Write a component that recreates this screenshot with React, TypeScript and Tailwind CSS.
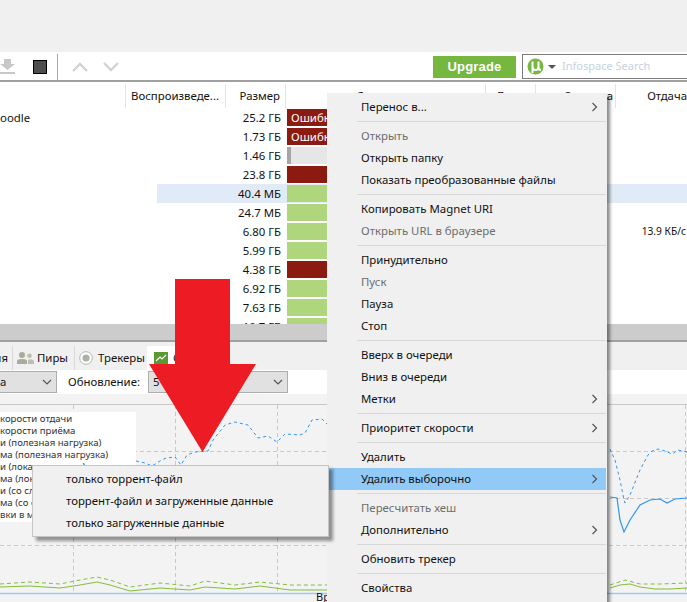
import React from "react";

const rows = [
  { name: "oodle", size: "25.2 ГБ", bar: "error", label: "Ошибка" },
  { name: "", size: "1.73 ГБ", bar: "error", label: "Ошибка" },
  { name: "", size: "1.46 ГБ", bar: "idle", label: "" },
  { name: "", size: "23.8 ГБ", bar: "error", label: "" },
  { name: "", size: "40.4 МБ", bar: "done", label: "", selected: true },
  { name: "", size: "24.7 МБ", bar: "done", label: "" },
  { name: "", size: "6.80 ГБ", bar: "done", label: "", upload: "13.9 КБ/с" },
  { name: "", size: "5.99 ГБ", bar: "done", label: "" },
  { name: "", size: "4.38 ГБ", bar: "error", label: "" },
  { name: "", size: "6.92 ГБ", bar: "done", label: "" },
  { name: "", size: "7.63 ГБ", bar: "done", label: "" },
  { name: "", size: "10.7 ГБ", bar: "done", label: "" },
];

type MenuItem = { text?: string; muted?: boolean; more?: boolean; active?: boolean };

const menu: MenuItem[] = [
  { text: "Перенос в...", more: true },
  {},
  { text: "Открыть", muted: true },
  { text: "Открыть папку" },
  { text: "Показать преобразованные файлы" },
  {},
  { text: "Копировать Magnet URI" },
  { text: "Открыть URL в браузере", muted: true },
  {},
  { text: "Принудительно" },
  { text: "Пуск", muted: true },
  { text: "Пауза" },
  { text: "Стоп" },
  {},
  { text: "Вверх в очереди" },
  { text: "Вниз в очереди" },
  { text: "Метки", more: true },
  {},
  { text: "Приоритет скорости", more: true },
  {},
  { text: "Удалить" },
  { text: "Удалить выборочно", more: true, active: true },
  {},
  { text: "Пересчитать хеш", muted: true },
  { text: "Дополнительно", more: true },
  {},
  { text: "Обновить трекер" },
  {},
  { text: "Свойства" },
];

const legend = [
  "корости отдачи",
  "корости приёма",
  "и (полезная нагрузка)",
  "ма (полезная нагрузка)",
  "и (локальная сеть)",
  "ма (локальная сеть)",
  "и (со служебными)",
  "ма (со служебными)",
  "вки в минуту",
];

function Chevron() {
  return (
    <svg width="7" height="10" viewBox="0 0 7 10" className="shrink-0">
      <path d="M1.5 1 L5.5 5 L1.5 9" fill="none" stroke="#555" strokeWidth="1.2" />
    </svg>
  );
}

function SelectArrow() {
  return (
    <svg width="10" height="6" viewBox="0 0 10 6" className="shrink-0">
      <path d="M1 1 L5 5 L9 1" fill="none" stroke="#555" strokeWidth="1.2" />
    </svg>
  );
}

function Chart() {
  // coordinates are relative to the graph panel, which starts at y=394
  const h = (y: number) => y - 394;
  const pts = (list: number[][]) => list.map(([x, y]) => `${x},${h(y)}`).join(" ");
  const vertical = [73, 175, 277, 379, 481, 583, 685];
  const horizontal = [451, 498, 545];
  return (
    <svg width="687" height="208" className="absolute left-0 top-0">
      <line x1="0" x2="687" y1={h(404.5)} y2={h(404.5)} stroke="#c8c8c8" />
      {vertical.map((x) => (
        <line key={x} x1={x + 0.5} x2={x + 0.5} y1={h(405)} y2={h(593)} stroke="#c8c8c8" strokeDasharray="4 3" />
      ))}
      {horizontal.map((y) => (
        <line key={y} x1="0" x2="687" y1={y - 393.5} y2={y - 393.5} stroke="#c8c8c8" strokeDasharray="4 3" />
      ))}
      <polyline
        fill="none"
        stroke="#2f96f3"
        strokeDasharray="3 3"
        points={pts([[136, 461], [145, 463], [152, 466], [160, 461], [166, 458], [175, 457], [181, 465], [187, 455], [195, 452], [208, 451], [213, 440], [225, 425], [235, 422], [248, 425], [258, 438], [268, 436], [277, 442], [285, 434], [300, 435], [305, 433], [312, 420], [322, 419], [327, 424]])}
      />
      <polyline
        fill="none"
        stroke="#2f96f3"
        strokeDasharray="3 3"
        points={pts([[610, 449], [615, 460], [620, 480], [624, 500], [625, 503], [630, 495], [640, 470], [648, 455], [652, 451], [658, 449], [665, 451], [672, 454], [678, 450], [687, 452]])}
      />
      <polyline
        fill="none"
        stroke="#2f96f3"
        strokeWidth="1.2"
        points={pts([[610, 497], [617, 498], [620, 520], [624, 532], [630, 520], [640, 505], [650, 500], [660, 499], [667, 503], [675, 499], [687, 498]])}
      />
      <polyline
        fill="none"
        stroke="#84bd3a"
        strokeDasharray="4 3"
        points={pts([[0, 584], [30, 582], [60, 584], [80, 580], [97, 577], [110, 580], [130, 587], [160, 583], [190, 586], [205, 581], [235, 585], [260, 582], [290, 585], [330, 585]])}
      />
      <polyline
        fill="none"
        stroke="#84bd3a"
        points={pts([[0, 587], [30, 586], [60, 588], [80, 585], [97, 582], [110, 585], [130, 591], [160, 588], [190, 590], [205, 587], [235, 589], [260, 586], [290, 590], [330, 590]])}
      />
      <polyline
        fill="none"
        stroke="#84bd3a"
        strokeDasharray="4 3"
        points={pts([[610, 585], [625, 580], [640, 584], [660, 584], [687, 583]])}
      />
      <polyline
        fill="none"
        stroke="#84bd3a"
        points={pts([[610, 588], [620, 585], [630, 584], [640, 587], [655, 589], [670, 589], [687, 588]])}
      />
      <line x1="0" x2="687" y1={h(593.5)} y2={h(593.5)} stroke="#9ccbee" strokeWidth="1.5" />
    </svg>
  );
}

export default function App() {
  return (
    <div className="relative flex h-[602px] w-[687px] flex-col overflow-hidden bg-white font-['Noto_Sans','Open_Sans',sans-serif] text-[11.4px] text-[#111]">
      {/* window top */}
      <div className="h-[52px] shrink-0 bg-[#f0f0f0]" />

      {/* toolbar */}
      <div className="flex h-[30px] shrink-0 items-center border-b-2 border-[#a0a0a0] bg-white pt-[2px]">
        <svg width="15" height="16" viewBox="0 0 15 16">
          <path d="M4 0 H11 V5 H15 L7.5 11 L0 5 H4 Z M0 13 H15 V15 H0 Z" fill="#c8c8c8" />
        </svg>
        <div className="ml-[18px] h-[14px] w-[14px] border border-black bg-[#4d4d4d]" />
        <div className="ml-[10px] h-[26px] w-px bg-[#a8a8a8]" />
        <svg width="16" height="10" viewBox="0 0 16 10" className="ml-[14px]">
          <path d="M1 9 L8 2 L15 9" fill="none" stroke="#d2d2d2" strokeWidth="2.4" />
        </svg>
        <svg width="16" height="10" viewBox="0 0 16 10" className="ml-[15px]">
          <path d="M1 1 L8 8 L15 1" fill="none" stroke="#d2d2d2" strokeWidth="2.4" />
        </svg>
        <div className="ml-[314px] flex h-[22px] w-[83px] items-center justify-center bg-[#76b73f] font-['Liberation_Sans',sans-serif] text-[13px] font-bold tracking-[0.2px] text-white">
          Upgrade
        </div>
        <div className="ml-[6px] mt-[-1px] flex h-[25px] flex-1 items-center border border-r-0 border-[#7c7c7c] pl-[4px]">
          <svg width="17" height="17" viewBox="0 0 17 17">
            <circle cx="8.5" cy="8.5" r="8" fill="#76b73f" />
            <path d="M5.5 3.5 V15 M5.5 8.5 Q5.5 12 8.5 12 Q11.5 12 11.5 8.5 V3.5 M11.5 8.5 Q11.5 12 14 12" fill="none" stroke="#fff" strokeWidth="2" />
          </svg>
          <div className="ml-[4px] h-0 w-0 border-x-[4px] border-t-[4px] border-x-transparent border-t-[#555]" />
          <span className="ml-[6px] text-[11px] text-[#c5d2e0]">Infospace Search</span>
        </div>
      </div>

      {/* list header */}
      <div className="flex h-[26px] shrink-0 items-center whitespace-nowrap bg-white pt-[2px]">
        <div className="h-[24px] w-[126px] border-r border-[#e5e5e5]" />
        <div className="flex h-[24px] w-[100px] items-center justify-end border-r border-[#e5e5e5] pr-[6px]">
          Воспроизведе...
        </div>
        <div className="flex h-[24px] w-[60px] items-center justify-end border-r border-[#e5e5e5] pr-[5px]">Размер</div>
        <div className="flex h-[24px] w-[200px] items-center justify-center border-r border-[#e5e5e5]">Состояние</div>
        <div className="flex h-[24px] w-[50px] items-center overflow-hidden border-r border-[#e5e5e5] pl-[10px]">Доступно</div>
        <div className="flex h-[24px] w-[80px] items-center overflow-hidden border-r border-[#e5e5e5] pl-[29px]">Загрузка</div>
        <div className="flex h-[24px] flex-1 items-center justify-end">Отдача</div>
      </div>

      {/* torrent rows */}
      <div className="h-[216px] shrink-0 overflow-hidden bg-white">
        {rows.map((r) => (
          <div key={r.size} className="flex h-[19px] items-center">
            <div className="w-[157px] shrink-0 truncate">{r.name}</div>
            <div className={`flex h-[19px] flex-1 items-center ${r.selected ? "bg-[#e1ebf7]" : ""}`}>
              <div className="flex w-[129px] shrink-0 items-center justify-end pr-[5px]">{r.size}</div>
              <div className="h-[17px] w-[200px] shrink-0 pl-px">
                {r.bar === "error" && (
                  <div className="flex h-[17px] items-center bg-[#8b1a10] pl-[4px] text-white">{r.label}</div>
                )}
                {r.bar === "done" && <div className="h-[17px] bg-[#afd67c]" />}
                {r.bar === "idle" && (
                  <div className="h-[17px] bg-[#e6e6e6]">
                    <div className="h-[17px] w-[4px] bg-[#a6a6a6]" />
                  </div>
                )}
              </div>
              <div className="flex-1 whitespace-nowrap pr-px text-right text-[10.2px]">{r.upload}</div>
            </div>
          </div>
        ))}
      </div>

      {/* splitter */}
      <div className="h-[18px] shrink-0 border-b-2 border-[#a0a0a0] bg-[#cccccc]" />

      {/* tabs */}
      <div className="flex h-[28px] shrink-0 items-end bg-[#f0f0f0]">
        <div className="flex h-[24px] w-[13px] items-center justify-end overflow-hidden border-r border-[#d9d9d9] pr-[4px]">ия</div>
        <div className="flex h-[24px] w-[62px] items-center border-r border-[#d9d9d9] pl-[4px]">
          <svg width="17" height="12" viewBox="0 0 17 12" className="shrink-0">
            <path d="M5 0 a2.8 2.8 0 0 1 0 6 a2.8 2.8 0 0 1 0 -6 Z M0 12 V9 Q0 7 5 7 Q10 7 10 9 V12 Z" fill="#a9ac9c" />
            <path d="M12.5 1.5 a2.3 2.3 0 0 1 0 4.6 a2.3 2.3 0 0 1 0 -4.6 Z M11 12 V8 Q13 6.8 15 7.4 Q17 8 17 9.5 V12 Z" fill="#bcbeb0" />
          </svg>
          <span className="ml-[3px]">Пиры</span>
        </div>
        <div className="flex h-[24px] w-[72px] items-center pl-[4px]">
          <svg width="14" height="14" viewBox="0 0 14 14" className="shrink-0">
            <circle cx="7" cy="7" r="6.3" fill="#fff" stroke="#b5b5b5" />
            <circle cx="7" cy="7" r="3.6" fill="#a9b3a0" />
          </svg>
          <span className="ml-[5px]">Трекеры</span>
        </div>
        <div className="flex h-[24px] w-[83px] items-center bg-white pl-[7px]">
          <svg width="14" height="12" viewBox="0 0 14 12" className="shrink-0">
            <rect width="14" height="12" fill="#5b9a32" />
            <path d="M2 9 L6 5 L8 7 L12 3" fill="none" stroke="#fff" strokeWidth="1.2" />
          </svg>
          <span className="ml-[5px]">Скорость</span>
        </div>
      </div>

      {/* graph options */}
      <div className="flex h-[24px] shrink-0 items-center bg-white">
        <div className="flex h-[22px] w-[57px] items-center justify-between border border-l-0 border-[#adadad] bg-[#e1e1e1] pr-[4px]">
          <span>а</span>
          <SelectArrow />
        </div>
        <span className="ml-[11px] w-[80px]">Обновление:</span>
        <div className="flex h-[22px] w-[140px] items-center justify-between border border-[#adadad] bg-[#e1e1e1] px-[4px]">
          <span>5</span>
          <SelectArrow />
        </div>
      </div>

      {/* graph */}
      <div className="relative flex-1 bg-[#f3f3f3]">
        <Chart />
        <div className="absolute left-0 top-[18px] h-[110px] w-[136px] overflow-hidden bg-white pt-px text-[9.6px] leading-[12px] text-[#333]">
          {legend.map((l) => (
            <div key={l} className="h-[12px] whitespace-nowrap">
              {l}
            </div>
          ))}
        </div>
        <span className="absolute left-[316px] top-[197px] text-[11px] leading-[12px]">Время</span>
      </div>

      {/* arrow pasted on top of the screenshot */}
      <svg width="108" height="174" viewBox="0 0 108 174" className="absolute left-[149px] top-[279px]">
        <path d="M26 0 H81 V85 H107 L53.5 173 L0 85 H26 Z" fill="#ed1c24" />
      </svg>

      {/* context menu */}
      <div className="absolute left-[327px] top-[93px] w-[280px] bg-[#f0f0f0] py-[3px] pl-[2px] pr-px shadow-[3px_3px_3px_rgba(0,0,0,0.45)]">
        {menu.map((m, i) =>
          m.text ? (
            <div
              key={i}
              className={`flex h-[22px] items-center justify-between pl-[32px] pr-[8px] ${m.active ? "bg-[#91c9f7]" : ""} ${m.muted ? "text-[#6d6d6d]" : ""}`}
            >
              <span>{m.text}</span>
              {m.more && <Chevron />}
            </div>
          ) : (
            <div key={i} className="flex h-[7px] items-center pl-[28px]">
              <div className="h-px w-full bg-[#d7d7d7]" />
            </div>
          )
        )}
      </div>

      {/* delete submenu */}
      <div className="absolute left-[32px] top-[465px] w-[297px] border border-[#c4c4c4] bg-[#f0f0f0] py-[2px] pl-[33px] shadow-[4px_4px_3px_rgba(0,0,0,0.4)]">
        <div className="flex h-[22px] items-center">только торрент-файл</div>
        <div className="flex h-[22px] items-center">торрент-файл и загруженные данные</div>
        <div className="flex h-[22px] items-center">только загруженные данные</div>
      </div>
    </div>
  );
}
